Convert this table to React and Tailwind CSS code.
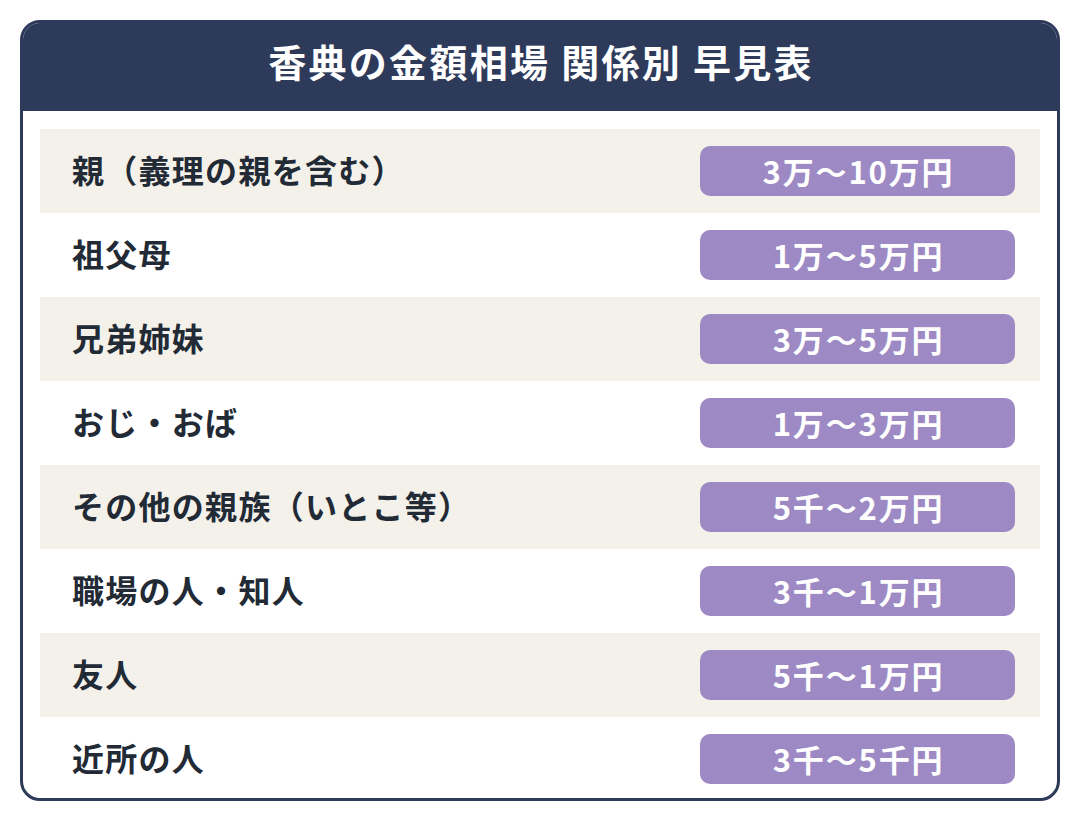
const ROWS = [
  { label: "親（義理の親を含む）", amount: "3万〜10万円" },
  { label: "祖父母", amount: "1万〜5万円" },
  { label: "兄弟姉妹", amount: "3万〜5万円" },
  { label: "おじ・おば", amount: "1万〜3万円" },
  { label: "その他の親族（いとこ等）", amount: "5千〜2万円" },
  { label: "職場の人・知人", amount: "3千〜1万円" },
  { label: "友人", amount: "5千〜1万円" },
  { label: "近所の人", amount: "3千〜5千円" },
];

export default function App() {
  return (
    <div
      className="w-[1080px] h-[820px] bg-white pt-[20px] px-[20px]"
      style={{ fontFamily: '"Noto Sans CJK JP", "Noto Sans", sans-serif' }}
    >
      <div className="w-[1040px] h-[781px] rounded-[20px] border-[3px] border-[#2e3a5a] overflow-hidden bg-white flex flex-col">
        <div className="h-[88px] bg-[#2e3a5a] flex items-center justify-center shrink-0 pb-[12px] pl-[2px]">
          <h1 className="text-white text-[38px] font-bold tracking-[0.06em] leading-none">
            香典の金額相場 関係別 早見表
          </h1>
        </div>
        <div className="px-[17px] pt-[18px] flex flex-col">
          {ROWS.map((row, i) => (
            <div
              key={i}
              className={`h-[84px] flex items-center justify-between pl-[32px] pr-[25px] ${
                i % 2 === 0 ? "bg-[#f4f1ea]" : "bg-white"
              }`}
            >
              <span className="text-[32px] font-bold text-[#222a35] tracking-[0.04em] leading-none pb-[5px]">
                {row.label}
              </span>
              <span className="w-[315px] h-[50px] rounded-[10px] bg-[#9d8ac4] flex items-center justify-center pl-[2px] pb-[2px] text-white text-[31px] font-bold tracking-[0.06em] leading-none">
                {row.amount}
              </span>
            </div>
          ))}
        </div>
      </div>
    </div>
  );
}
